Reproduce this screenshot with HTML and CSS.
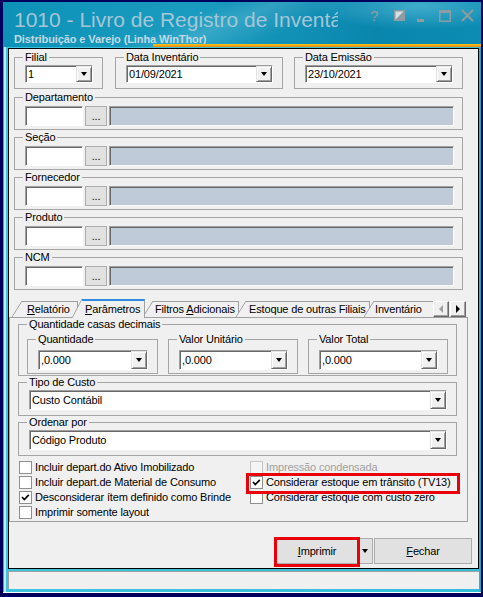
FILE: index.html
```html
<!DOCTYPE html>
<html lang="pt-BR">

<head>
    <meta charset="UTF-8">
    <title>1010 - Livro de Registro de Inventário</title>
    <link rel="stylesheet" href="styles.css">
</head>

<body>
    <div class="janela">
        <!-- barra de título -->
        <div class="barra-titulo">
            <div class="topo">
                <div class="titulos">
                    <div class="titulo">1010 - Livro de Registro de Inventário</div>
                    <div class="subtitulo">Distribuição e Varejo (Linha WinThor)</div>
                </div>
                <div class="botoes-janela">
                    <svg width="108" height="16" viewBox="0 0 108 16">
                        <text x="2" y="13" font-family="Liberation Sans, Arial, sans-serif" font-size="15" fill="#8d9ca3">?</text>
                        <rect x="26.5" y="2.5" width="10" height="10" fill="#8d9ca3" stroke="#8d9ca3" />
                        <polygon points="27.5,3.5 35.5,3.5 27.5,11.5" fill="#d3e1e7" />
                        <rect x="49" y="11" width="7" height="3" fill="#8d9ca3" />
                        <rect x="71.75" y="2.75" width="10.5" height="10.5" fill="none" stroke="#8d9ca3" stroke-width="1.5" />
                        <rect x="71" y="2" width="12" height="3" fill="#8d9ca3" />
                        <path d="M94 2 L105 13 M105 2 L94 13" stroke="#8d9ca3" stroke-width="2" />
                    </svg>
                </div>
            </div>
            <div class="faixa-laranja"></div>
        </div>

        <div class="cliente">
            <!-- filial e datas -->
            <div class="linha-topo">
                <fieldset class="grupo topo-filial">
                    <legend>Filial</legend>
                    <div class="combo"><span>1</span><i class="botao-seta"><b></b></i></div>
                </fieldset>
                <fieldset class="grupo topo-inventario">
                    <legend>Data Inventário</legend>
                    <div class="combo"><span>01/09/2021</span><i class="botao-seta"><b></b></i></div>
                </fieldset>
                <fieldset class="grupo topo-emissao">
                    <legend>Data Emissão</legend>
                    <div class="combo"><span>23/10/2021</span><i class="botao-seta"><b></b></i></div>
                </fieldset>
            </div>

            <!-- filtros de pesquisa -->
            <fieldset class="grupo busca primeira">
                <legend>Departamento</legend>
                <div class="campo-busca"><span class="codigo"></span><span class="reticencias">...</span><span class="descricao"></span></div>
            </fieldset>
            <fieldset class="grupo busca">
                <legend>Seção</legend>
                <div class="campo-busca"><span class="codigo"></span><span class="reticencias">...</span><span class="descricao"></span></div>
            </fieldset>
            <fieldset class="grupo busca">
                <legend>Fornecedor</legend>
                <div class="campo-busca"><span class="codigo"></span><span class="reticencias">...</span><span class="descricao"></span></div>
            </fieldset>
            <fieldset class="grupo busca">
                <legend>Produto</legend>
                <div class="campo-busca"><span class="codigo"></span><span class="reticencias">...</span><span class="descricao"></span></div>
            </fieldset>
            <fieldset class="grupo busca">
                <legend>NCM</legend>
                <div class="campo-busca"><span class="codigo"></span><span class="reticencias">...</span><span class="descricao"></span></div>
            </fieldset>

            <!-- abas -->
            <div class="abas">
                <div class="linha-abas">
                    <div class="aba aba1"><span><u>R</u>elatório</span></div>
                    <div class="aba aba2 ativa"><span><u>P</u>arâmetros</span></div>
                    <div class="aba aba3"><span>Filtros <u>A</u>dicionais</span></div>
                    <div class="aba aba4"><span>Estoque de outras Filiais</span></div>
                    <div class="aba aba5"><span>Inventário</span></div>
                    <div class="seta-aba desabilitada"><b class="esq"></b></div>
                    <div class="seta-aba"><b class="dir"></b></div>
                </div>
                <div class="pagina">
                    <fieldset class="grupo decimais">
                        <legend>Quantidade casas decimais</legend>
                        <div class="linha-decimais">
                            <fieldset class="grupo dec-qtd">
                                <legend>Quantidade</legend>
                                <div class="combo alto"><span>,0.000</span><i class="botao-seta"><b></b></i></div>
                            </fieldset>
                            <fieldset class="grupo dec-unit">
                                <legend>Valor Unitário</legend>
                                <div class="combo alto"><span>,0.000</span><i class="botao-seta"><b></b></i></div>
                            </fieldset>
                            <fieldset class="grupo dec-total">
                                <legend>Valor Total</legend>
                                <div class="combo alto"><span>,0.000</span><i class="botao-seta"><b></b></i></div>
                            </fieldset>
                        </div>
                    </fieldset>

                    <fieldset class="grupo largo">
                        <legend>Tipo de Custo</legend>
                        <div class="combo alto"><span>Custo Contábil</span><i class="botao-seta"><b></b></i></div>
                    </fieldset>
                    <fieldset class="grupo largo">
                        <legend>Ordenar por</legend>
                        <div class="combo alto"><span>Código Produto</span><i class="botao-seta"><b></b></i></div>
                    </fieldset>

                    <div class="opcoes">
                        <label class="opcao"><i class="caixa"></i>Incluir depart.do Ativo Imobilizado</label>
                        <label class="opcao desabilitada"><i class="caixa"></i>Impressão condensada</label>
                        <label class="opcao"><i class="caixa"></i>Incluir depart.de Material de Consumo</label>
                        <label class="opcao"><i class="caixa"><svg width="11" height="11" viewBox="0 0 11 11"><polyline points="2,5 4.3,7.5 8.8,2.8" fill="none" stroke="#000" stroke-width="1.7" /></svg></i>Considerar estoque em trânsito (TV13)</label>
                        <label class="opcao"><i class="caixa"><svg width="11" height="11" viewBox="0 0 11 11"><polyline points="2,5 4.3,7.5 8.8,2.8" fill="none" stroke="#000" stroke-width="1.7" /></svg></i>Desconsiderar ítem definido como Brinde</label>
                        <label class="opcao"><i class="caixa"></i>Considerar estoque com custo zero</label>
                        <label class="opcao"><i class="caixa"></i>Imprimir somente layout</label>
                        <div class="destaque destaque-transito"></div>
                    </div>
                </div>
            </div>

            <!-- botões -->
            <div class="rodape">
                <div class="grupo-imprimir">
                    <button class="botao imprimir"><u>I</u>mprimir</button>
                    <button class="botao menu"><b></b></button>
                    <div class="destaque destaque-imprimir"></div>
                </div>
                <button class="botao fechar"><u>F</u>echar</button>
            </div>
        </div>

        <div class="barra-status"></div>
    </div>
</body>

</html>
```

FILE: styles.css
```css
* {
    margin: 0;
    padding: 0;
    box-sizing: border-box;
}

body {
    background-color: #00005c;
    padding-top: 2px;
    font: 11px/13px "Liberation Sans", Arial, sans-serif;
    letter-spacing: -0.15px;
    color: #000;
}

/* moldura da janela */
.janela {
    margin-left: 3px;
    width: 478px;
    height: 591px;
    display: flex;
    flex-direction: column;
    border-bottom: 1px solid #fff;
    background: linear-gradient(90deg, #22b2ce 0, #22b2ce 1px, #b4eef6 1px, #b4eef6 3px, #3ec4dc 3px, #34bed8 calc(100% - 2px), #1a9cbc 100%);
}

.barra-titulo {
    height: 45px;
    display: flex;
    flex-direction: column;
    background:
        radial-gradient(ellipse 150px 34px at 415px 4px, rgba(130, 215, 238, .45), rgba(130, 215, 238, 0) 70%),
        linear-gradient(158deg, rgba(255, 255, 255, 0) 38%, rgba(255, 255, 255, .13) 47%, rgba(255, 255, 255, 0) 60%),
        linear-gradient(90deg, #0d91b6, #1a9cc0 40%, #0a86ad 78%, #0c8cb2);
}

.topo {
    height: 42px;
    display: flex;
}

.titulos {
    padding: 7px 0 0 11px;
}

.titulo {
    width: 324px;
    overflow: hidden;
    white-space: nowrap;
    font-size: 21px;
    line-height: 22px;
    letter-spacing: 0;
    color: #a3c6d8;
}

.subtitulo {
    margin-top: 2px;
    font-weight: bold;
    white-space: nowrap;
    letter-spacing: -0.1px;
    color: #c3dae5;
}

.botoes-janela {
    margin-left: auto;
    padding: 6px 5px 0 0;
}

.faixa-laranja {
    height: 3px;
    margin-left: 150px;
    background: linear-gradient(#f6c41c, #e88a12);
}

/* área do formulário */
.cliente {
    margin: 1px 2px 0 5px;
    height: 521px;
    border: 1px solid #000;
    background-color: #f0f0f0;
}

.grupo {
    min-width: 0;
    border: 1px solid #a5a5a5;
}

.grupo legend {
    margin-left: -2px;
    padding: 0 2px;
    line-height: 13px;
}

.linha-topo {
    display: flex;
    padding: 2px 0 0 5px;
}

.linha-topo .grupo {
    padding: 1px 9px 5px 10px;
}

.topo-filial {
    width: 89px;
    margin-right: 12px;
}

.topo-inventario {
    width: 168px;
    margin-right: 11px;
}

.topo-emissao {
    width: 169px;
}

/* caixa de combinação */
.combo {
    display: flex;
    height: 18px;
    background-color: #fff;
    border: 1px solid;
    border-color: #a0a0a0 #fff #fff #a0a0a0;
    box-shadow: inset 1px 1px 0 #696969;
}

.combo.alto {
    height: 20px;
}

.combo span {
    flex: 1;
    padding: 2px 0 0 2px;
    white-space: nowrap;
}

.combo.alto span {
    padding-top: 3px;
}

.botao-seta {
    width: 16px;
    display: flex;
    align-items: center;
    justify-content: center;
    background-color: #f0f0f0;
    border: 1px solid;
    border-color: #e3e3e3 #696969 #696969 #e3e3e3;
    box-shadow: inset 1px 1px 0 #fff, inset -1px -1px 0 #a0a0a0;
}

.botao-seta b,
.botao.menu b {
    width: 0;
    height: 0;
    border-left: 3.5px solid transparent;
    border-right: 3.5px solid transparent;
    border-top: 4px solid #000;
}

/* campos de pesquisa */
.busca {
    width: 449px;
    margin: 1px 0 0 5px;
    padding: 2px 8px 3px 10px;
}

.busca.primeira {
    margin-top: 2px;
}

.campo-busca {
    display: flex;
    gap: 2px;
    height: 20px;
}

.codigo,
.descricao {
    border: 1px solid;
    border-color: #a0a0a0 #fff #fff #a0a0a0;
    box-shadow: inset 1px 1px 0 #696969;
}

.codigo {
    width: 58px;
    background-color: #fff;
}

.reticencias {
    width: 22px;
    padding-top: 3px;
    text-align: center;
    background-color: #e1e1e1;
    border: 1px solid #adadad;
}

.descricao {
    flex: 1;
    background-color: #bfcbd8;
}

/* abas */
.abas {
    margin-top: 9px;
    width: 459px;
}

.linha-abas {
    height: 18px;
    display: flex;
    align-items: flex-end;
}

.aba {
    position: relative;
    display: flex;
    height: 16px;
    white-space: nowrap;
}

.aba::before {
    content: "";
    width: 10px;
    flex: none;
    background: linear-gradient(to bottom right, transparent calc(50% - .8px), #a0a0a0 50%, #f0f0f0 calc(50% + .8px));
}

.aba span {
    padding-top: 1px;
    background-color: #f0f0f0;
    border-top: 1px solid #a0a0a0;
    border-right: 1px solid #a0a0a0;
}

.aba.ativa {
    z-index: 2;
    height: 19px;
    margin-bottom: -1px;
}

.aba.ativa span {
    padding-top: 2px;
    border-top: 2px solid #2f8ae0;
}

.aba1 {
    margin-left: 3px;
}

.aba1 span {
    width: 56px;
    padding-left: 5px;
}

.aba2 {
    margin-left: -6px;
}

.aba2 span {
    width: 63px;
    padding-left: 3px;
}

.aba3 {
    margin-left: -2px;
}

.aba3 span {
    width: 86px;
    padding-left: 2px;
}

.aba4 {
    margin-left: -3px;
}

.aba4 span {
    width: 124px;
    padding-left: 3px;
}

.aba5 {
    margin-left: -6px;
}

.aba5 span {
    width: 60px;
    padding-left: 1px;
}

.seta-aba {
    position: relative;
    z-index: 3;
    width: 16px;
    height: 16px;
    margin-left: 1px;
    display: flex;
    align-items: center;
    justify-content: center;
    background-color: #f0f0f0;
    border: 1px solid;
    border-color: #fff #696969 #696969 #fff;
    box-shadow: inset -1px -1px 0 #a0a0a0;
}

.seta-aba.desabilitada {
    margin-left: -1px;
}

.seta-aba .esq {
    border-top: 4px solid transparent;
    border-bottom: 4px solid transparent;
    border-right: 4px solid #a0a0a0;
}

.seta-aba .dir {
    border-top: 4px solid transparent;
    border-bottom: 4px solid transparent;
    border-left: 4px solid #000;
}

.pagina {
    height: 205px;
    padding: 0 10px 0 8px;
    border: 1px solid #a0a0a0;
}

.decimais {
    padding: 2px 8px 1px 8px;
}

.decimais > legend {
    margin-left: 0;
}

.linha-decimais {
    display: flex;
    gap: 10px;
}

.linha-decimais .grupo {
    padding: 4px 9px 3px 10px;
}

.dec-qtd {
    width: 131px;
}

.dec-unit {
    width: 130px;
}

.dec-total {
    width: 140px;
}

.largo {
    padding: 1px 9px 5px 10px;
}

/* caixas de seleção */
.opcoes {
    position: relative;
    margin: 5px 0 0 1px;
    display: grid;
    grid-template-columns: 231px auto;
    grid-auto-rows: 15px;
}

.opcao {
    display: flex;
    white-space: nowrap;
    line-height: 12px;
}

.caixa {
    width: 13px;
    height: 13px;
    margin-right: 3px;
    display: flex;
    align-items: center;
    justify-content: center;
    background-color: #fff;
    border: 1px solid #8e8f8f;
}

.opcao.desabilitada {
    color: #a0a0a0;
}

.opcao.desabilitada .caixa {
    background-color: #f4f4f4;
    border-color: #c6c6c6;
}

.destaque {
    position: absolute;
    border: 3px solid #e8000b;
}

.destaque-transito {
    left: 227px;
    top: 12px;
    width: 214px;
    height: 21px;
}

/* botões do rodapé */
.rodape {
    display: flex;
    justify-content: flex-end;
    margin-top: 16px;
    padding-right: 6px;
}

.grupo-imprimir {
    position: relative;
    display: flex;
    margin-right: 1px;
}

.botao {
    height: 26px;
    font: inherit;
    letter-spacing: inherit;
    color: #000;
    background-color: #e1e1e1;
    border: 1px solid #adadad;
}

.imprimir {
    width: 82px;
}

.botao.menu {
    width: 15px;
    border-left: none;
    display: flex;
    align-items: center;
    justify-content: center;
}

.fechar {
    width: 98px;
}

.destaque-imprimir {
    left: -2px;
    top: -1px;
    width: 86px;
    height: 30px;
}

.barra-status {
    margin: 2px 2px 0 5px;
    height: 18px;
    background-color: #f0f0f0;
    border-top: 1px solid #a0a0a0;
    border-left: 1px solid #a0a0a0;
}
```
